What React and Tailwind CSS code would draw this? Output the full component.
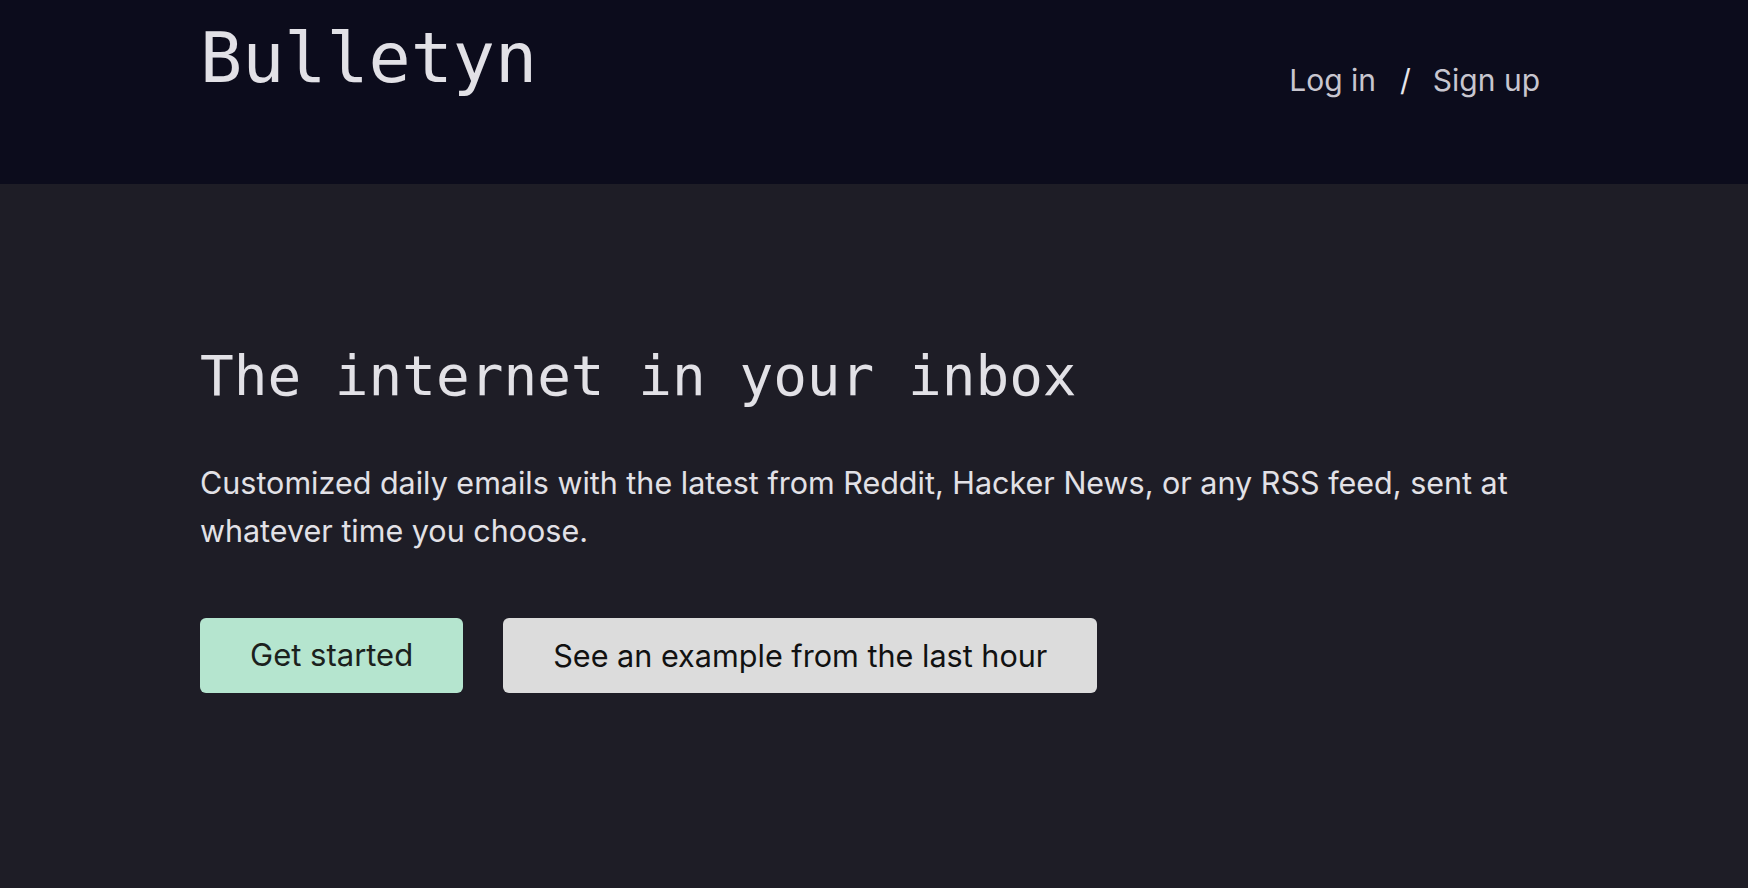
export default function App() {
  return (
    <div className="min-h-screen w-full bg-[#1e1d26] font-['Inter','Noto_Sans',sans-serif]">
      <header className="h-[184px] w-full bg-[#0c0c1c]">
        <div className="flex items-start justify-between pl-[200px] pr-[208px]">
          <a href="#" className="mt-[15px] font-['DejaVu_Sans_Mono',monospace] text-[70px] leading-[86px] text-[#e2e1e6]">
            Bulletyn
          </a>
          <nav className="mt-[61px] flex items-center text-[30px] leading-[38px] text-[#c8c6cf]">
            <a href="#">Log in</a>
            <span className="ml-[24px] mr-[22px] text-[#e6e5ea]">/</span>
            <a href="#">Sign up</a>
          </nav>
        </div>
      </header>
      <main className="pl-[200px] pr-[200px] pt-[160px]">
        <h1 className="font-['DejaVu_Sans_Mono',monospace] text-[56px] leading-[64px] text-[#e2e1e6]">
          The internet in your inbox
        </h1>
        <p className="mt-[51px] max-w-[1340px] text-[30.5px] leading-[48px] text-[#e2e1e6]">
          Customized daily emails with the latest from Reddit, Hacker News, or any RSS feed, sent at whatever time you choose.
        </p>
        <div className="mt-[63px] flex gap-[40px]">
          <button type="button" className="h-[75px] rounded-md bg-[#b5e5cf] px-[50px] text-[31px] text-[#1b211d]">
            Get started
          </button>
          <button type="button" className="h-[75px] rounded-md bg-[#dcdcdc] px-[50px] text-[30.6px] text-[#111111]">
            See an example from the last hour
          </button>
        </div>
      </main>
    </div>
  );
}
